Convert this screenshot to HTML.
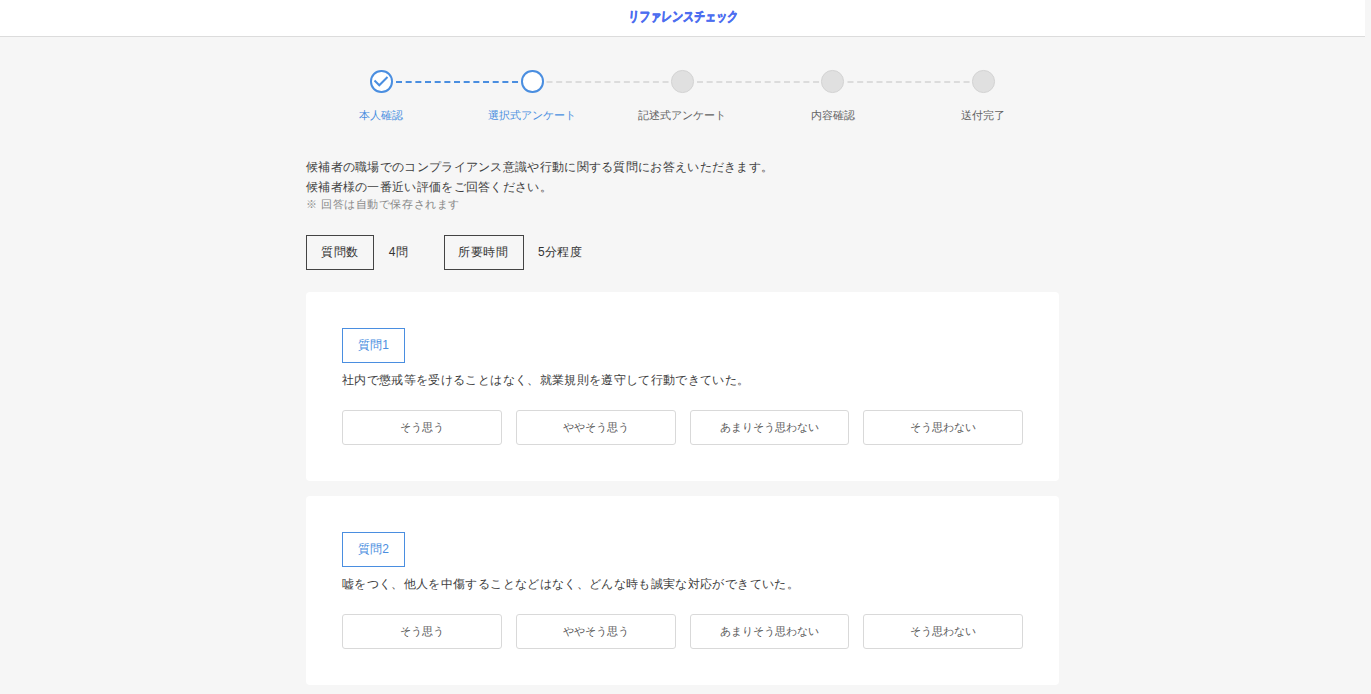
<!DOCTYPE html>
<html lang="ja">
<head>
<meta charset="utf-8">
<style>
*{margin:0;padding:0;box-sizing:border-box;}
html,body{width:1371px;height:694px;overflow:hidden;background:#f6f6f6;font-family:"Liberation Sans",sans-serif;color:#333;}
.abs{position:absolute;white-space:nowrap;}
#hdr{position:absolute;left:0;top:0;width:1365px;height:37px;background:#fff;border-bottom:1px solid #dcdcdc;}
#logo{position:absolute;left:627.5px;top:8px;font-size:13.5px;font-weight:bold;color:#4d6ef0;transform-origin:0 50%;transform:scaleX(0.786) skewX(-6deg);-webkit-text-stroke:0.7px #4d6ef0;}
.circ{position:absolute;width:22.5px;height:22.5px;border-radius:50%;top:70px;}
.done,.cur{border:2px solid #4a8ee0;background:#fff;}
.todo{background:#e0e0e0;border:1px solid #d3d3d3;}
.lbl{position:absolute;top:108px;font-size:11px;width:150px;text-align:center;color:#626262;}
.lbl.b{color:#4a8ee0;}
.intro{position:absolute;left:306px;font-size:12px;letter-spacing:0.3px;color:#404040;}
.note{position:absolute;left:306px;font-size:11px;letter-spacing:0.55px;color:#888;}
.ibox{position:absolute;top:235px;height:35px;border:1px solid #444;font-size:12px;letter-spacing:0.5px;line-height:33px;text-align:center;color:#333;}
.ival{position:absolute;top:244px;font-size:12px;letter-spacing:0.3px;color:#333;}
.card{position:absolute;left:306px;width:753px;height:189px;background:#fff;border-radius:4px;}
.tag{position:absolute;left:36px;top:36px;width:63px;height:35px;border:1px solid #4a8ee0;color:#4a8ee0;font-size:12px;line-height:33px;text-align:center;}
.q{position:absolute;left:36px;top:80px;font-size:12px;letter-spacing:0.35px;color:#404040;white-space:nowrap;}
.btn{position:absolute;top:118px;width:159.5px;height:34.5px;border:1px solid #d9d9d9;border-radius:3px;font-size:11px;line-height:32px;text-align:center;color:#5a5a5a;}
</style>
</head>
<body>
<div id="hdr"><div id="logo">リファレンスチェック</div></div>

<svg class="abs" style="left:0;top:0" width="1371" height="140">
  <line x1="396" y1="82" x2="518.5" y2="82" stroke="#4a8ee0" stroke-width="2" stroke-dasharray="6 3.67"/>
  <line x1="546.5" y1="82" x2="669" y2="82" stroke="#dcdcdc" stroke-width="2" stroke-dasharray="6 3.67"/>
  <line x1="697" y1="82" x2="819.5" y2="82" stroke="#dcdcdc" stroke-width="2" stroke-dasharray="6 3.67"/>
  <line x1="847.5" y1="82" x2="970" y2="82" stroke="#dcdcdc" stroke-width="2" stroke-dasharray="6 3.67"/>
</svg>
<div class="circ done" style="left:370.25px"></div>
<svg class="abs" style="left:370px;top:70px" width="23" height="23"><polyline points="4.5,10.5 9.3,15.3 17.5,7" fill="none" stroke="#4a8ee0" stroke-width="2"/></svg>
<div class="circ cur" style="left:521px"></div>
<div class="circ todo" style="left:671px"></div>
<div class="circ todo" style="left:821px"></div>
<div class="circ todo" style="left:972px"></div>

<div class="lbl b" style="left:306px">本人確認</div>
<div class="lbl b" style="left:457px">選択式アンケート</div>
<div class="lbl" style="left:607px">記述式アンケート</div>
<div class="lbl" style="left:758px">内容確認</div>
<div class="lbl" style="left:908px">送付完了</div>

<div class="intro abs" style="top:159px">候補者の職場でのコンプライアンス意識や行動に関する質問にお答えいただきます。</div>
<div class="intro abs" style="top:178.5px">候補者様の一番近い評価をご回答ください。</div>
<div class="note abs" style="top:197px">※ 回答は自動で保存されます</div>

<div class="ibox" style="left:306px;width:68px">質問数</div>
<div class="ival" style="left:388.8px">4問</div>
<div class="ibox" style="left:444px;width:80px;padding-right:2px">所要時間</div>
<div class="ival" style="left:538px">5分程度</div>

<div class="card" style="top:292px">
  <div class="tag">質問1</div>
  <div class="q">社内で懲戒等を受けることはなく、就業規則を遵守して行動できていた。</div>
  <div class="btn" style="left:36px">そう思う</div>
  <div class="btn" style="left:210px">ややそう思う</div>
  <div class="btn" style="left:383.5px">あまりそう思わない</div>
  <div class="btn" style="left:557px">そう思わない</div>
</div>

<div class="card" style="top:496px">
  <div class="tag">質問2</div>
  <div class="q">嘘をつく、他人を中傷することなどはなく、どんな時も誠実な対応ができていた。</div>
  <div class="btn" style="left:36px">そう思う</div>
  <div class="btn" style="left:210px">ややそう思う</div>
  <div class="btn" style="left:383.5px">あまりそう思わない</div>
  <div class="btn" style="left:557px">そう思わない</div>
</div>
</body>
</html>
